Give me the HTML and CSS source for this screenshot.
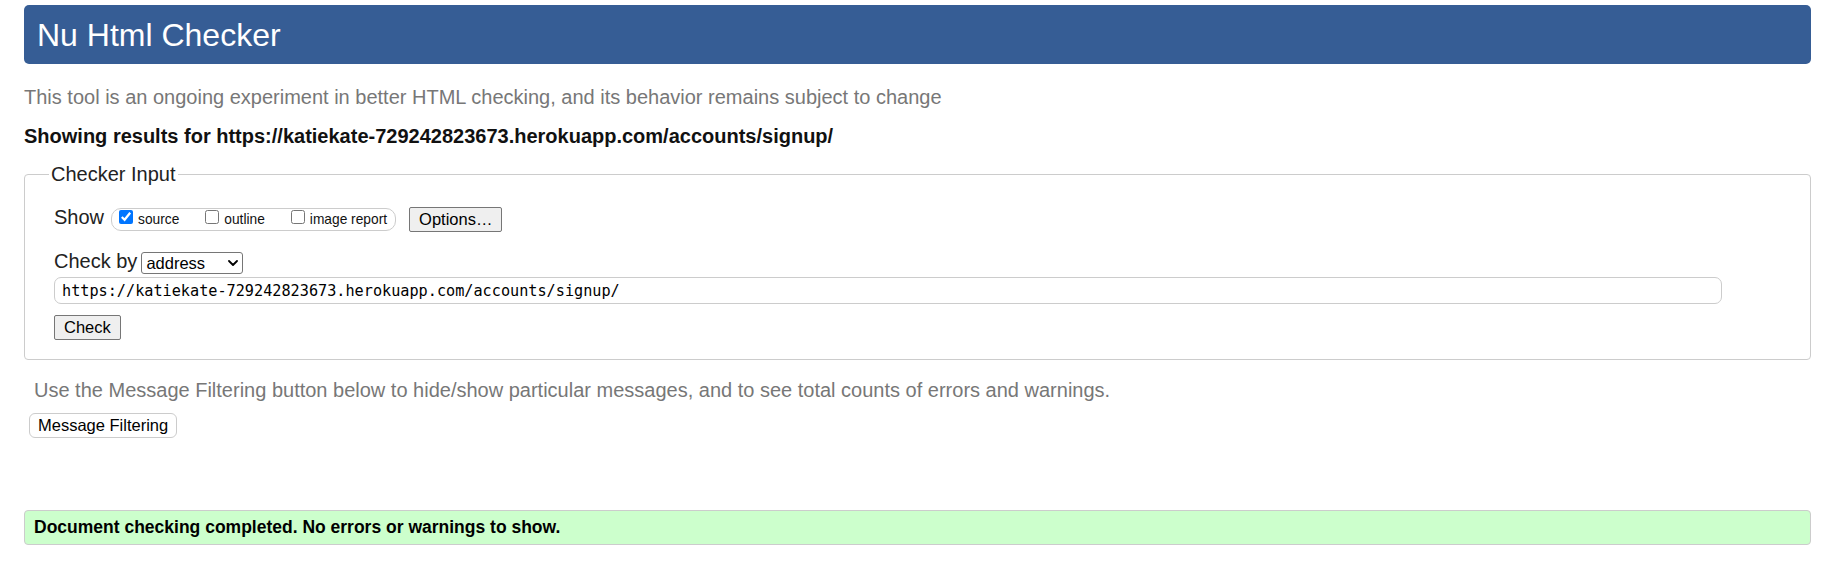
FILE: index.html
```html
<!DOCTYPE html>
<html lang="en">
<head>
<meta charset="utf-8">
<title>Showing results for https://katiekate-729242823673.herokuapp.com/accounts/signup/ - Nu Html Checker</title>
<link rel="stylesheet" href="styles.css">
</head>
<body>
<h1 class="title">Nu Html Checker</h1>
<p class="intro">This tool is an ongoing experiment in better HTML checking, and its behavior remains subject to change</p>
<p class="showing">Showing results for https://katiekate-729242823673.herokuapp.com/accounts/signup/</p>
<form class="checker">
<fieldset class="input-set">
<legend class="legend">Checker Input</legend>
<div class="inner">
<div class="show-row">
<span class="row-label">Show</span>
<div class="toggles">
<label class="toggle"><input type="checkbox" checked>source</label>
<label class="toggle"><input type="checkbox">outline</label>
<label class="toggle"><input type="checkbox">image report</label>
</div>
<button type="button" class="btn options">Options…</button>
</div>
<div class="checkby-row">
<span class="row-label">Check by</span>
<span class="select-wrap">
<select class="select"><option>address</option><option>file upload</option><option>text input</option></select>
<svg class="chevron" viewBox="0 0 10 6" aria-hidden="true"><path d="M1 1 L5 5 L9 1" fill="none" stroke="#000" stroke-width="1.8" stroke-linecap="round" stroke-linejoin="round"/></svg>
</span>
</div>
<input class="url" type="url" value="https://katiekate-729242823673.herokuapp.com/accounts/signup/">
<button type="button" class="btn check">Check</button>
</div>
</fieldset>
</form>
<p class="filter-note">Use the Message Filtering button below to hide/show particular messages, and to see total counts of errors and warnings.</p>
<button type="button" class="filter-btn">Message Filtering</button>
<div class="success">Document checking completed. No errors or warnings to show.</div>
</body>
</html>
```

FILE: styles.css
```css
* { box-sizing: border-box; }
html { background: #fff; }
body {
  margin: 0;
  padding: 5px 17px 0 24px;
  font-family: "Liberation Sans", Arial, sans-serif;
  font-size: 20px;
  line-height: 23px;
  color: #222;
}
.title {
  margin: 0;
  height: 59px;
  padding: 1px 13px 0;
  background: #365d95;
  color: #fff;
  border-radius: 5px;
  font-size: 32px;
  font-weight: normal;
  line-height: 58px;
}
.intro { margin: 22px 0 0; color: #777; }
.showing { margin: 16px 0 0; font-weight: bold; color: #111; }
.checker { margin: 0; }
.input-set {
  margin: 15px 0 0;
  padding: 21px 0 19px 29px;
  border: 1px solid #ccc;
  border-radius: 4px;
  min-width: 0;
}
.legend { padding: 0 2px; margin-left: -5px; font-size: 20px; line-height: 23px; }
.inner { display: flex; flex-direction: column; align-items: flex-start; }
.show-row { display: flex; align-items: center; height: 25px; }
.row-label { padding-bottom: 4px; }
.toggles {
  display: flex;
  align-items: center;
  gap: 26px;
  height: 23px;
  margin-left: 7px;
  padding: 0 8px 0 7px;
  border: 1px solid #ccc;
  border-radius: 10px;
  font-size: 13.75px;
  line-height: 16px;
  color: #111;
}
.toggle { display: flex; align-items: center; }
.toggle input { width: 14px; height: 14px; margin: 0 5px 6px 0; accent-color: #0075ff; }
.btn {
  height: 25px;
  padding: 0 9px;
  font-family: "Liberation Sans", Arial, sans-serif;
  font-size: 16.5px;
  color: #000;
  background: #efefef;
  border: 1px solid #767676;
  border-radius: 2px;
}
.options { margin-left: 13px; padding: 0 9px; }
.checkby-row { display: flex; align-items: center; height: 22px; margin-top: 20px; }
.select-wrap { position: relative; display: flex; margin-left: 4px; }
.select {
  appearance: none;
  -webkit-appearance: none;
  width: 102px;
  height: 22px;
  padding: 0 0 0 4px;
  border: 1px solid #767676;
  border-radius: 3px;
  font: 16.5px "Liberation Sans", Arial, sans-serif;
  color: #000;
  background: #fff;
}
.chevron { position: absolute; right: 5px; top: 8px; width: 10px; height: 6px; pointer-events: none; }
.url {
  margin-top: 3px;
  width: 95%;
  height: 27px;
  padding: 0 7px;
  border: 1px solid #ccc;
  border-radius: 7px;
  font: 15.2px "DejaVu Sans Mono", monospace;
  color: #000;
}
.check { margin-top: 11px; }
.filter-note { margin: 19px 0 0 10px; color: #777; }
.filter-btn {
  display: block;
  margin: 11px 0 0 5px;
  height: 25px;
  padding: 0 8px;
  font: 16.5px "Liberation Sans", Arial, sans-serif;
  color: #000;
  background: #fff;
  border: 1px solid #ccc;
  border-radius: 6px;
}
.success {
  margin-top: 72px;
  height: 35px;
  padding: 0 9px;
  border: 1px solid #ccc;
  border-radius: 4px;
  background: #cfc;
  font-weight: bold;
  font-size: 17.5px;
  line-height: 33px;
  color: #000;
}
```
